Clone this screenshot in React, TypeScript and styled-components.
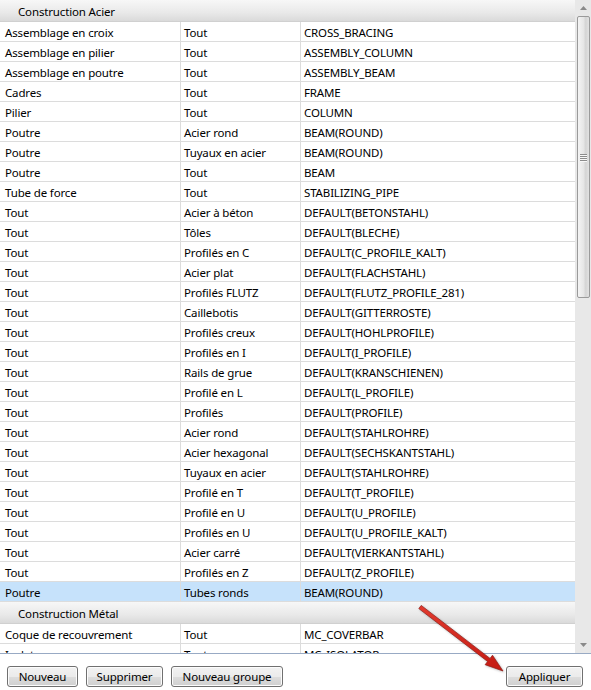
import styled, { createGlobalStyle } from 'styled-components';

const GlobalStyle = createGlobalStyle`
  html, body {
    margin: 0;
    padding: 0;
    background: #ffffff;
  }
  body {
    font-family: "Segoe UI", "Noto Sans", "Liberation Sans", sans-serif;
    font-size: 11.5px;
    letter-spacing: -0.15px;
    color: #000;
  }
`;

type Row = [string, string, string];

const acier: Row[] = [
  ['Assemblage en croix', 'Tout', 'CROSS_BRACING'],
  ['Assemblage en pilier', 'Tout', 'ASSEMBLY_COLUMN'],
  ['Assemblage en poutre', 'Tout', 'ASSEMBLY_BEAM'],
  ['Cadres', 'Tout', 'FRAME'],
  ['Pilier', 'Tout', 'COLUMN'],
  ['Poutre', 'Acier rond', 'BEAM(ROUND)'],
  ['Poutre', 'Tuyaux en acier', 'BEAM(ROUND)'],
  ['Poutre', 'Tout', 'BEAM'],
  ['Tube de force', 'Tout', 'STABILIZING_PIPE'],
  ['Tout', 'Acier à béton', 'DEFAULT(BETONSTAHL)'],
  ['Tout', 'Tôles', 'DEFAULT(BLECHE)'],
  ['Tout', 'Profilés en C', 'DEFAULT(C_PROFILE_KALT)'],
  ['Tout', 'Acier plat', 'DEFAULT(FLACHSTAHL)'],
  ['Tout', 'Profilés FLUTZ', 'DEFAULT(FLUTZ_PROFILE_281)'],
  ['Tout', 'Caillebotis', 'DEFAULT(GITTERROSTE)'],
  ['Tout', 'Profilés creux', 'DEFAULT(HOHLPROFILE)'],
  ['Tout', 'Profilés en I', 'DEFAULT(I_PROFILE)'],
  ['Tout', 'Rails de grue', 'DEFAULT(KRANSCHIENEN)'],
  ['Tout', 'Profilé en L', 'DEFAULT(L_PROFILE)'],
  ['Tout', 'Profilés', 'DEFAULT(PROFILE)'],
  ['Tout', 'Acier rond', 'DEFAULT(STAHLROHRE)'],
  ['Tout', 'Acier hexagonal', 'DEFAULT(SECHSKANTSTAHL)'],
  ['Tout', 'Tuyaux en acier', 'DEFAULT(STAHLROHRE)'],
  ['Tout', 'Profilé en T', 'DEFAULT(T_PROFILE)'],
  ['Tout', 'Profilé en U', 'DEFAULT(U_PROFILE)'],
  ['Tout', 'Profilés en U', 'DEFAULT(U_PROFILE_KALT)'],
  ['Tout', 'Acier carré', 'DEFAULT(VIERKANTSTAHL)'],
  ['Tout', 'Profilés en Z', 'DEFAULT(Z_PROFILE)'],
  ['Poutre', 'Tubes ronds', 'BEAM(ROUND)'],
];

const metal: Row[] = [
  ['Coque de recouvrement', 'Tout', 'MC_COVERBAR'],
  ['Isolateur', 'Tout', 'MC_ISOLATOR'],
];

function GridRow({ row, selected }: { row: Row; selected?: boolean }) {
  return (
    <RowStyle $selected={selected}>
      <Cell>{row[0]}</Cell>
      <Cell>{row[1]}</Cell>
      <Cell>{row[2]}</Cell>
    </RowStyle>
  );
}

function App() {
  return (
    <>
      <GlobalStyle />
      <Window>
        <ListFrame>
          <Table>
            <GroupHeader>Construction Acier</GroupHeader>
            {acier.map((row, i) => (
              <GridRow key={i} row={row} selected={i === acier.length - 1} />
            ))}
            <GroupHeader>Construction Métal</GroupHeader>
            {metal.map((row, i) => (
              <GridRow key={'m' + i} row={row} />
            ))}
          </Table>
          <ScrollBar>
            <ArrowButton>
              <svg width="7" height="4" viewBox="0 0 7 4">
                <path d="M0 4 L3.5 0 L7 4 Z" fill="#8a8a8a" />
              </svg>
            </ArrowButton>
            <Track>
              <Thumb>
                <Grip>
                  <span />
                  <span />
                  <span />
                  <span />
                </Grip>
              </Thumb>
            </Track>
            <ArrowButton>
              <svg width="7" height="4" viewBox="0 0 7 4">
                <path d="M0 0 L3.5 4 L7 0 Z" fill="#8a8a8a" />
              </svg>
            </ArrowButton>
          </ScrollBar>
        </ListFrame>
        <ButtonBar>
          <Button $w={71}>Nouveau</Button>
          <Button $w={77}>Supprimer</Button>
          <Button $w={112}>Nouveau groupe</Button>
          <Spacer />
          <Button $w={77}>Appliquer</Button>
        </ButtonBar>
        <Annotation width="120" height="90" viewBox="0 0 120 90">
          <defs>
            <linearGradient id="arrowFill" x1="0" y1="0" x2="1" y2="1">
              <stop offset="0" stopColor="#e23a2e" />
              <stop offset="1" stopColor="#c41a12" />
            </linearGradient>
          </defs>
          <path
            d="M6.8 4.6 L75.6 57.5 L73.1 60.7 L91 67 L80.5 51.2 L78 54.4 L9.2 1.4 Z"
            fill="url(#arrowFill)"
            stroke="#8c1a14"
            strokeWidth="0.7"
            strokeLinejoin="round"
          />
        </Annotation>
      </Window>
    </>
  );
}

export default App;

const Window = styled.div`
  position: relative;
  width: 591px;
  height: 690px;
  display: flex;
  flex-direction: column;
  background: #fff;
  overflow: hidden;
`;

const ListFrame = styled.div`
  height: 653px;
  display: flex;
  border-bottom: 1px solid #98aac4;
  flex-shrink: 0;
`;

const Table = styled.div`
  flex: 1;
  overflow: hidden;
  display: flex;
  flex-direction: column;
`;

const GroupHeader = styled.div`
  flex-shrink: 0;
  height: 22px;
  line-height: 23px;
  padding-left: 18px;
  background: linear-gradient(#f7f7f7, #e9e9e9 60%, #dadada);
  border-bottom: 1px solid #d0d0d0;
  box-sizing: border-box;
`;

const RowStyle = styled.div<{ $selected?: boolean }>`
  flex-shrink: 0;
  display: grid;
  grid-template-columns: 180px 120px 1fr;
  height: 20px;
  box-sizing: border-box;
  border-bottom: 1px solid #dcdcdc;
  background: ${(p) => (p.$selected ? '#c6e2fb' : '#fff')};
`;

const Cell = styled.div`
  padding-left: 5px;
  line-height: 21px;
  white-space: nowrap;
  overflow: hidden;
  & + & {
    border-left: 1px solid #dcdcdc;
    padding-left: 3px;
  }
`;

const ScrollBar = styled.div`
  width: 16px;
  flex-shrink: 0;
  display: flex;
  flex-direction: column;
  background: #e8e8e8;
`;

const ArrowButton = styled.div`
  height: 16px;
  display: flex;
  align-items: center;
  justify-content: center;
`;

const Track = styled.div`
  flex: 1;
  padding: 0 1px 0 2px;
`;

const Thumb = styled.div`
  height: 282px;
  box-sizing: border-box;
  border: 1px solid #9a9a9a;
  border-radius: 2px;
  background: linear-gradient(90deg, #f4f4f4, #e6e6e6 50%, #d4d4d4 70%, #e2e2e2);
  display: flex;
  align-items: center;
  justify-content: center;
`;

const Grip = styled.div`
  display: flex;
  flex-direction: column;
  gap: 1px;
  & span {
    display: block;
    width: 7px;
    height: 1px;
    background: #8c8c8c;
    box-shadow: 0 1px 0 #f8f8f8;
  }
`;

const ButtonBar = styled.div`
  flex: 1;
  display: flex;
  align-items: flex-end;
  gap: 8px;
  padding: 0 8px 3px 7px;
`;

const Spacer = styled.div`
  flex: 1;
`;

const Button = styled.button<{ $w: number }>`
  width: ${(p) => p.$w}px;
  height: 21px;
  padding: 0;
  font-family: "Segoe UI", "Noto Sans", "Liberation Sans", sans-serif;
  font-size: 11.5px;
  letter-spacing: -0.15px;
  color: #000;
  border: 1px solid #707070;
  border-radius: 3px;
  background: linear-gradient(#f2f2f2, #ebebeb 50%, #dddddd 51%, #cfcfcf);
  box-shadow: inset 0 0 0 1px #fcfcfc;
`;

const Annotation = styled.svg`
  position: absolute;
  left: 412px;
  top: 604px;
  pointer-events: none;
  filter: drop-shadow(1px 1px 1px rgba(0, 0, 0, 0.25));
`;
